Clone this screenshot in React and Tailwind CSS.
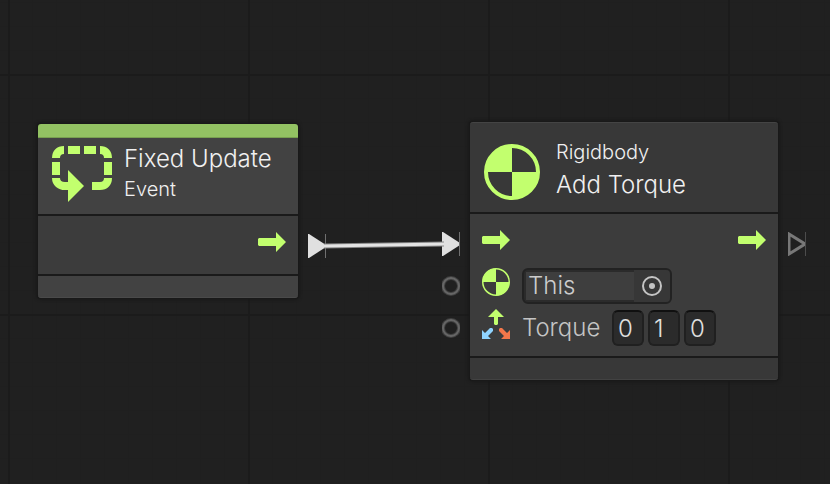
const gridLines =
  "bg-[#202020] bg-[linear-gradient(to_right,#1b1b1b_2px,transparent_2px),linear-gradient(to_bottom,#1b1b1b_2px,transparent_2px),linear-gradient(to_right,#1f1f1f_1px,transparent_1px),linear-gradient(to_bottom,#1f1f1f_1px,transparent_1px)] bg-[size:240px_240px,240px_240px,24px_24px,24px_24px] bg-[position:8px_74px]";

function FlowArrow() {
  return (
    <svg className="block h-5 w-7 shrink-0" viewBox="0 0 28 20" fill="#c2ff6e" aria-hidden="true">
      <path d="M1 6H18V0L28 10L18 20V14H1L0 13V7Z" />
    </svg>
  );
}

function RigidbodyIcon({ className, ring }) {
  const r = 28 - ring / 2;
  return (
    <svg className={className} viewBox="0 0 56 56" aria-hidden="true">
      <circle cx="28" cy="28" r={r} fill="none" stroke="#c2ff6e" strokeWidth={ring} />
      <path d="M28 28V1A27 27 0 0 0 1 28ZM28 28V55A27 27 0 0 0 55 28Z" fill="#c2ff6e" />
    </svg>
  );
}

function LoopIcon() {
  return (
    <svg className="block h-14 w-15 shrink-0" viewBox="0 0 60 56" aria-hidden="true">
      <g fill="none" stroke="#c2ff6e" strokeWidth="8">
        <path d="M4 12C4 7 7 4 12 4M16 4H28M32 4H44M48 4C53 4 56 7 56 12M4 16V29M56 16V29" />
        <path d="M4 32C4 37 8 40 13 40H18M56 32C56 37 53 40 48 40H40" />
      </g>
      <path d="M16 24L32 40L16 56Z" fill="#c2ff6e" />
    </svg>
  );
}

function VectorIcon() {
  return (
    <svg className="block h-[30px] w-7 shrink-0" viewBox="0 0 28 30" aria-hidden="true">
      <path d="M14 0L22 8H16V15L15 16H13L12 15V8H6Z" fill="#c2ff6e" />
      <path d="M0 21L3 24L8 19H10L11 20V22L6 27L9 30H0Z" fill="#8fd3ff" />
      <path d="M28 21L25 24L20 19H18L17 20V22L22 27L19 30H28Z" fill="#f3774a" />
    </svg>
  );
}

function FlowPort({ className, connected }) {
  return (
    <svg className={`absolute h-6 w-[18px] ${className}`} viewBox="0 0 18 24" aria-hidden="true">
      {connected ? (
        <path d="M0 0H1L18 11V13L1 24H0Z" fill="#e0e0e0" />
      ) : (
        <path d="M1 2L17 12L1 22Z" fill="none" stroke="#787878" strokeWidth="3" />
      )}
      <path d="M17.5 0V24" stroke={connected ? "#707070" : "#4c4c4c"} />
    </svg>
  );
}

function ValuePort() {
  return (
    <svg className="absolute -left-7 top-1/2 h-5 w-[18px] -translate-y-1/2" viewBox="0 0 18 20" aria-hidden="true">
      <circle cx="9" cy="10" r="8" fill="none" stroke="#404040" strokeWidth="4" />
      <circle cx="9" cy="10" r="8" fill="none" stroke="#666666" strokeWidth="2" />
    </svg>
  );
}

function NumberBox({ label, value }) {
  return (
    <input
      aria-label={label}
      defaultValue={value}
      className="h-9 w-8 rounded-md border-2 border-[#202020] border-t-[#101010] bg-[#2b2b2b] pl-1 text-2xl font-light text-[#e0e0e0] outline-none"
    />
  );
}

function EventNode() {
  return (
    <section className="absolute left-[38px] top-[124px] w-[260px] rounded-[3px] shadow-[0_0_0_1px_#191919,0_0_3px_2px_#191919]">
      <div className="h-3.5 rounded-t-[3px] border-b border-[#78a050] bg-[#93c263]" />
      <header className="flex h-[76px] gap-3 bg-[#424242] pl-3.5">
        <div className="pt-2">
          <LoopIcon />
        </div>
        <div className="pt-[5px] whitespace-nowrap text-[#f0f0f0]">
          <h2 className="text-2xl leading-8 font-light">Fixed Update</h2>
          <p className="text-xl leading-7 font-light">Event</p>
        </div>
      </header>
      <div className="relative flex justify-end border-y-2 border-[#1a1a1a] bg-[#3c3c3c] pt-4 pr-3 pb-[22px]">
        <FlowArrow />
        <FlowPort connected className="-right-7 top-[18px]" />
      </div>
      <div className="h-[22px] rounded-b-[3px] border-b border-[#4a4a4a] bg-[#424242]" />
    </section>
  );
}

function TorqueNode() {
  return (
    <section className="absolute left-[470px] top-[122px] w-[308px] rounded-[3px] shadow-[0_0_0_1px_#191919,0_0_3px_2px_#191919]">
      <header className="flex h-[90px] gap-4 rounded-t-[3px] border-t border-[#444444] bg-[#383838] pl-3.5">
        <RigidbodyIcon className="mt-[21px] block size-14 shrink-0" ring={4} />
        <div className="flex flex-col gap-[3px] pt-[15px] whitespace-nowrap text-[#f0f0f0]">
          <p className="text-xl leading-7 font-light">Rigidbody</p>
          <h2 className="text-2xl leading-8 font-light">Add Torque</h2>
        </div>
      </header>
      <div className="border-y-2 border-[#1a1a1a] bg-[#3c3c3c] pt-[9px] pb-[7px]">
        <div className="relative flex h-[42px] items-center justify-between px-3 pb-2">
          <FlowPort connected className="-left-7 top-[9px]" />
          <FlowArrow />
          <FlowArrow />
          <FlowPort className="-right-7 top-[9px]" />
        </div>
        <div className="relative flex h-[42px] items-center gap-3 pl-3">
          <ValuePort />
          <div className="pb-2">
            <RigidbodyIcon className="block size-7 shrink-0" ring={3} />
          </div>
          <div className="flex h-9 w-[150px] items-stretch rounded-md border-2 border-[#222222] bg-[#2b2b2b] p-0.5">
            <input
              aria-label="Target"
              defaultValue="This"
              className="min-w-0 flex-1 bg-[#3e3e3e] pl-0.5 text-2xl font-light text-[#cccccc] outline-none"
            />
            <button type="button" aria-label="Pick target" className="-my-0.5 -mr-0.5 flex w-9 items-center justify-center rounded-r bg-[#373737]">
              <svg className="size-5" viewBox="0 0 20 20" aria-hidden="true">
                <circle cx="10" cy="10" r="9" fill="none" stroke="#c4c4c4" strokeWidth="2" />
                <circle cx="10" cy="10" r="3" fill="#c4c4c4" />
              </svg>
            </button>
          </div>
        </div>
        <div className="relative flex h-[42px] items-center gap-3 pl-3">
          <ValuePort />
          <div className="pb-2">
            <VectorIcon />
          </div>
          <span className="w-[78px] text-2xl font-light whitespace-nowrap text-[#c4c4c4]">Torque</span>
          <div className="flex gap-1">
            <NumberBox label="Torque X" value="0" />
            <NumberBox label="Torque Y" value="1" />
            <NumberBox label="Torque Z" value="0" />
          </div>
        </div>
      </div>
      <div className="h-[22px] rounded-b-[3px] border-b border-[#424242] bg-[#383838]" />
    </section>
  );
}

export default function App() {
  return (
    <main className={`relative min-h-screen w-full overflow-hidden font-['Inter',sans-serif] ${gridLines}`}>
      <EventNode />
      <TorqueNode />
      <svg className="absolute left-[324px] top-[238px] h-4 w-[120px]" viewBox="0 0 120 16" aria-hidden="true">
        <path d="M0 8L120 6" stroke="#858585" strokeWidth="5" />
        <path d="M0 8L120 6" stroke="#e4e4e4" strokeWidth="3" />
      </svg>
    </main>
  );
}
